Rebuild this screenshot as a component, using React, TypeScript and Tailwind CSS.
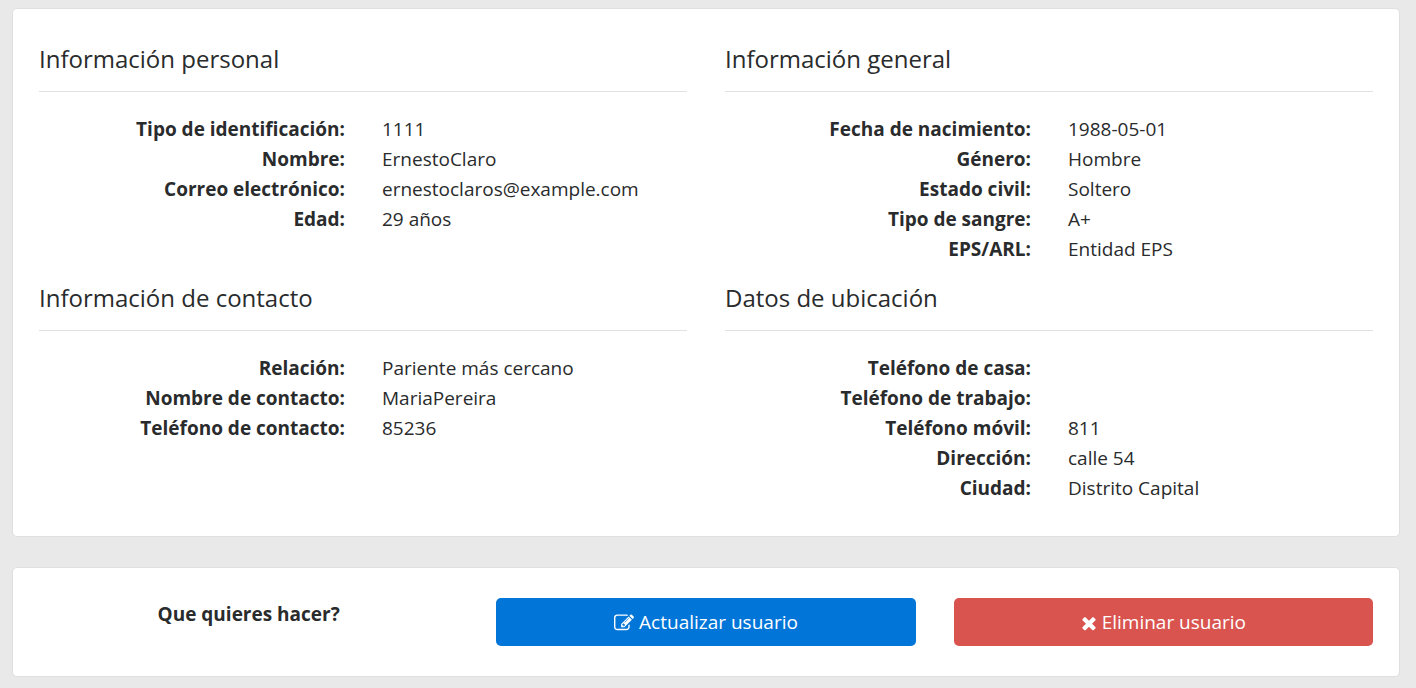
type Field = { label: string; value: string };

function Section({ title, fields }: { title: string; fields: Field[] }) {
  return (
    <section>
      <h2 className="border-b border-[#e2e2e3] pb-4 text-[24px] leading-[33px] font-medium">{title}</h2>
      <dl className="mt-[22px] grid grid-cols-[306fr_305fr] gap-x-[37px] text-[19px] leading-[30px]">
        {fields.map((f) => (
          <div key={f.label} className="contents">
            <dt className="text-right font-bold">{f.label}</dt>
            <dd>{f.value}</dd>
          </div>
        ))}
      </dl>
    </section>
  );
}

function EditIcon() {
  return (
    <svg className="mt-0.5 h-5 w-5" viewBox="0 0 1792 1792" fill="currentColor" aria-hidden="true">
      <path d="M888 1184l116-116-152-152-116 116v56h96v96h56zm440-720q-16-16-33 1l-350 350q-17 17-1 33t33-1l350-350q17-17 1-33zm80 594v190q0 119-84.5 203.5t-203.5 84.5h-832q-119 0-203.5-84.5t-84.5-203.5v-832q0-119 84.5-203.5t203.5-84.5h832q63 0 117 25 15 7 18 23 3 17-9 29l-49 49q-14 14-32 8-23-6-45-6h-832q-66 0-113 47t-47 113v832q0 66 47 113t113 47h832q66 0 113-47t47-113v-126q0-13 9-22l64-64q15-15 35-7t20 29zm-96-738l288 288-672 672h-288v-288zm444 132l-92 92-288-288 92-92q28-28 68-28t68 28l152 152q28 28 28 68t-28 68z" />
    </svg>
  );
}

function TimesIcon() {
  return (
    <svg className="mt-0.5 h-5 w-4" viewBox="213 0 1366 1792" fill="currentColor" aria-hidden="true">
      <path d="M1490 1322q0 40-28 68l-136 136q-28 28-68 28t-68-28l-294-294-294 294q-28 28-68 28t-68-28l-136-136q-28-28-28-68t28-68l294-294-294-294q-28-28-28-68t28-68l136-136q28-28 68-28t68 28l294 294 294-294q28-28 68-28t68 28l136 136q28 28 28 68t-28 68l-294 294 294 294q28 28 28 68z" />
    </svg>
  );
}

const personal: Field[] = [
  { label: "Tipo de identificación:", value: "1111" },
  { label: "Nombre:", value: "ErnestoClaro" },
  { label: "Correo electrónico:", value: "ernestoclaros@example.com" },
  { label: "Edad:", value: "29 años" },
];

const general: Field[] = [
  { label: "Fecha de nacimiento:", value: "1988-05-01" },
  { label: "Género:", value: "Hombre" },
  { label: "Estado civil:", value: "Soltero" },
  { label: "Tipo de sangre:", value: "A+" },
  { label: "EPS/ARL:", value: "Entidad EPS" },
];

const contacto: Field[] = [
  { label: "Relación:", value: "Pariente más cercano" },
  { label: "Nombre de contacto:", value: "MariaPereira" },
  { label: "Teléfono de contacto:", value: "85236" },
];

const ubicacion: Field[] = [
  { label: "Teléfono de casa:", value: "" },
  { label: "Teléfono de trabajo:", value: "" },
  { label: "Teléfono móvil:", value: "811" },
  { label: "Dirección:", value: "calle 54" },
  { label: "Ciudad:", value: "Distrito Capital" },
];

export default function App() {
  return (
    <main className="min-h-screen bg-[#e9e9e9] pt-2 pr-4 pb-3 pl-3 font-['Open_Sans','Noto_Sans',sans-serif] text-[#292b2c]">
      <div className="grid grid-cols-2 gap-x-[38px] gap-y-[17px] rounded-[5px] border border-[#dfdfdf] bg-white px-[26px] py-[33px]">
        <Section title="Información personal" fields={personal} />
        <Section title="Información general" fields={general} />
        <Section title="Información de contacto" fields={contacto} />
        <Section title="Datos de ubicación" fields={ubicacion} />
      </div>
      <div className="mt-[30px] grid grid-cols-3 gap-x-[38px] rounded-[5px] border border-[#dfdfdf] bg-white px-[26px] py-[30px] text-[19px]">
        <p className="text-center leading-[32px] font-bold">Que quieres hacer?</p>
        <button type="button" className="flex h-12 items-center justify-center gap-[5px] rounded-[5px] bg-[#0275d8] text-white">
          <EditIcon />
          Actualizar usuario
        </button>
        <button type="button" className="flex h-12 items-center justify-center gap-[5px] rounded-[5px] bg-[#d9534f] text-white">
          <TimesIcon />
          Eliminar usuario
        </button>
      </div>
    </main>
  );
}
